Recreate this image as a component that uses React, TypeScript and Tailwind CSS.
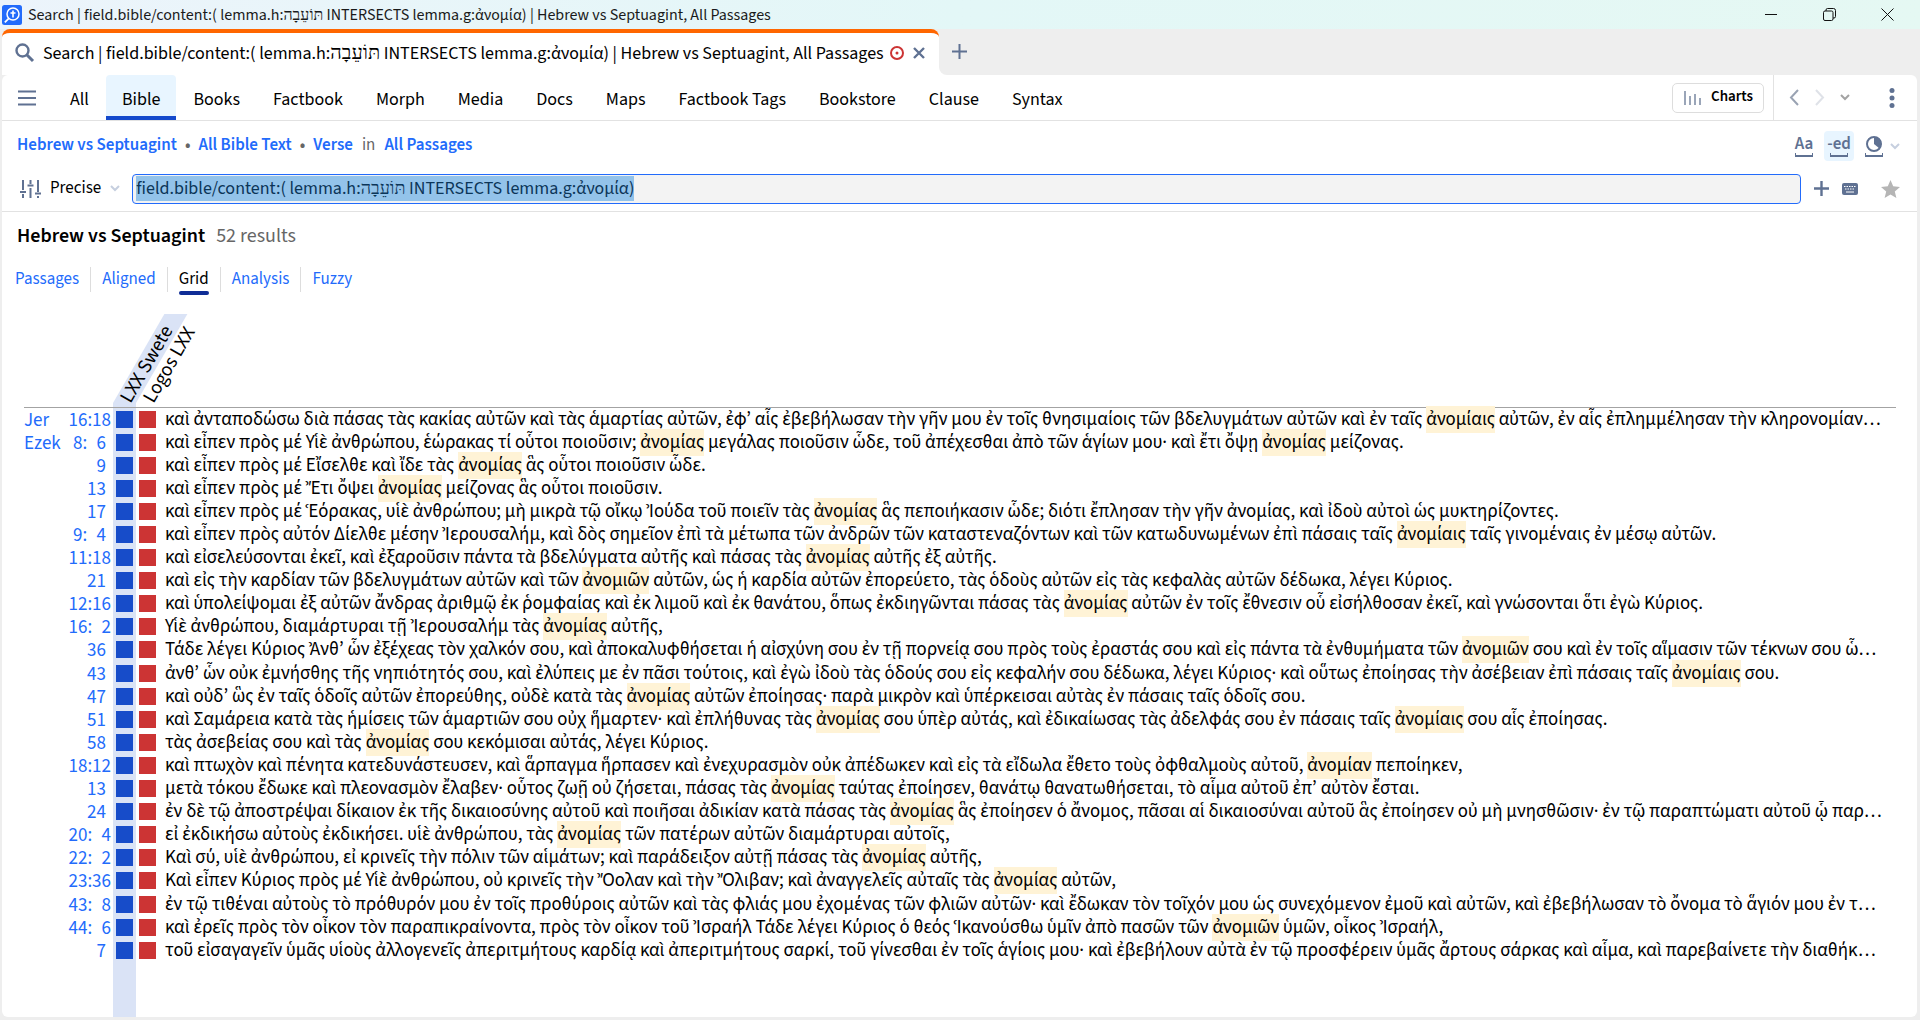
import { useEffect, useRef } from "react";
import type { ReactNode } from "react";

const HEBREW = "תּוֹעֵבָה";
const QUERY = `field.bible/content:( lemma.h:${HEBREW} INTERSECTS lemma.g:ἀνομία)`;

const NAV = ["All", "Bible", "Books", "Factbook", "Morph", "Media", "Docs", "Maps", "Factbook Tags", "Bookstore", "Clause", "Syntax"];
const VIEWS = ["Passages", "Aligned", "Grid", "Analysis", "Fuzzy"];

type Row = { book?: string; verse: string; text: string };

// Search hits are wrapped in square brackets. Single digit verses are padded with a figure space.
const ROWS: Row[] = [
  { book: "Jer", verse: "16:18", text: "καὶ ἀνταποδώσω διὰ πάσας τὰς κακίας αὐτῶν καὶ τὰς ἁμαρτίας αὐτῶν, ἐφ’ αἷς ἐβεβήλωσαν τὴν γῆν μου ἐν τοῖς θνησιμαίοις τῶν βδελυγμάτων αὐτῶν καὶ ἐν ταῖς [ἀνομίαις] αὐτῶν, ἐν αἷς ἐπλημμέλησαν τὴν κληρονομίαν…" },
  { book: "Ezek", verse: "8:\u20076", text: "καὶ εἶπεν πρὸς μέ Υἱὲ ἀνθρώπου, ἑώρακας τί οὗτοι ποιοῦσιν; [ἀνομίας] μεγάλας ποιοῦσιν ὧδε, τοῦ ἀπέχεσθαι ἀπὸ τῶν ἁγίων μου· καὶ ἔτι ὄψῃ [ἀνομίας] μείζονας." },
  { verse: "9", text: "καὶ εἶπεν πρὸς μέ Εἴσελθε καὶ ἴδε τὰς [ἀνομίας] ἃς οὗτοι ποιοῦσιν ὧδε." },
  { verse: "13", text: "καὶ εἶπεν πρὸς μέ Ἔτι ὄψει [ἀνομίας] μείζονας ἃς οὗτοι ποιοῦσιν." },
  { verse: "17", text: "καὶ εἶπεν πρὸς μέ Ἑόρακας, υἱὲ ἀνθρώπου; μὴ μικρὰ τῷ οἴκῳ Ἰούδα τοῦ ποιεῖν τὰς [ἀνομίας] ἃς πεποιήκασιν ὧδε; διότι ἔπλησαν τὴν γῆν ἀνομίας, καὶ ἰδοὺ αὐτοὶ ὡς μυκτηρίζοντες." },
  { verse: "9:\u20074", text: "καὶ εἶπεν πρὸς αὐτόν Δίελθε μέσην Ἰερουσαλήμ, καὶ δὸς σημεῖον ἐπὶ τὰ μέτωπα τῶν ἀνδρῶν τῶν καταστεναζόντων καὶ τῶν κατωδυνωμένων ἐπὶ πάσαις ταῖς [ἀνομίαις] ταῖς γινομέναις ἐν μέσῳ αὐτῶν." },
  { verse: "11:18", text: "καὶ εἰσελεύσονται ἐκεῖ, καὶ ἐξαροῦσιν πάντα τὰ βδελύγματα αὐτῆς καὶ πάσας τὰς [ἀνομίας] αὐτῆς ἐξ αὐτῆς." },
  { verse: "21", text: "καὶ εἰς τὴν καρδίαν τῶν βδελυγμάτων αὐτῶν καὶ τῶν [ἀνομιῶν] αὐτῶν, ὡς ἡ καρδία αὐτῶν ἐπορεύετο, τὰς ὁδοὺς αὐτῶν εἰς τὰς κεφαλὰς αὐτῶν δέδωκα, λέγει Κύριος." },
  { verse: "12:16", text: "καὶ ὑπολείψομαι ἐξ αὐτῶν ἄνδρας ἀριθμῷ ἐκ ῥομφαίας καὶ ἐκ λιμοῦ καὶ ἐκ θανάτου, ὅπως ἐκδιηγῶνται πάσας τὰς [ἀνομίας] αὐτῶν ἐν τοῖς ἔθνεσιν οὗ εἰσήλθοσαν ἐκεῖ, καὶ γνώσονται ὅτι ἐγὼ Κύριος." },
  { verse: "16:\u20072", text: "Υἱὲ ἀνθρώπου, διαμάρτυραι τῇ Ἰερουσαλήμ τὰς [ἀνομίας] αὐτῆς," },
  { verse: "36", text: "Τάδε λέγει Κύριος Ἀνθ’ ὧν ἐξέχεας τὸν χαλκόν σου, καὶ ἀποκαλυφθήσεται ἡ αἰσχύνη σου ἐν τῇ πορνείᾳ σου πρὸς τοὺς ἐραστάς σου καὶ εἰς πάντα τὰ ἐνθυμήματα τῶν [ἀνομιῶν] σου καὶ ἐν τοῖς αἵμασιν τῶν τέκνων σου ὧ…" },
  { verse: "43", text: "ἀνθ’ ὧν οὐκ ἐμνήσθης τῆς νηπιότητός σου, καὶ ἐλύπεις με ἐν πᾶσι τούτοις, καὶ ἐγὼ ἰδοὺ τὰς ὁδούς σου εἰς κεφαλήν σου δέδωκα, λέγει Κύριος· καὶ οὕτως ἐποίησας τὴν ἀσέβειαν ἐπὶ πάσαις ταῖς [ἀνομίαις] σου." },
  { verse: "47", text: "καὶ οὐδ’ ὣς ἐν ταῖς ὁδοῖς αὐτῶν ἐπορεύθης, οὐδὲ κατὰ τὰς [ἀνομίας] αὐτῶν ἐποίησας· παρὰ μικρὸν καὶ ὑπέρκεισαι αὐτὰς ἐν πάσαις ταῖς ὁδοῖς σου." },
  { verse: "51", text: "καὶ Σαμάρεια κατὰ τὰς ἡμίσεις τῶν ἁμαρτιῶν σου οὐχ ἥμαρτεν· καὶ ἐπλήθυνας τὰς [ἀνομίας] σου ὑπὲρ αὐτάς, καὶ ἐδικαίωσας τὰς ἀδελφάς σου ἐν πάσαις ταῖς [ἀνομίαις] σου αἷς ἐποίησας." },
  { verse: "58", text: "τὰς ἀσεβείας σου καὶ τὰς [ἀνομίας] σου κεκόμισαι αὐτάς, λέγει Κύριος." },
  { verse: "18:12", text: "καὶ πτωχὸν καὶ πένητα κατεδυνάστευσεν, καὶ ἅρπαγμα ἥρπασεν καὶ ἐνεχυρασμὸν οὐκ ἀπέδωκεν καὶ εἰς τὰ εἴδωλα ἔθετο τοὺς ὀφθαλμοὺς αὐτοῦ, [ἀνομίαν] πεποίηκεν," },
  { verse: "13", text: "μετὰ τόκου ἔδωκε καὶ πλεονασμὸν ἔλαβεν· οὗτος ζωῇ οὐ ζήσεται, πάσας τὰς [ἀνομίας] ταύτας ἐποίησεν, θανάτῳ θανατωθήσεται, τὸ αἷμα αὐτοῦ ἐπ’ αὐτὸν ἔσται." },
  { verse: "24", text: "ἐν δὲ τῷ ἀποστρέψαι δίκαιον ἐκ τῆς δικαιοσύνης αὐτοῦ καὶ ποιῆσαι ἀδικίαν κατὰ πάσας τὰς [ἀνομίας] ἃς ἐποίησεν ὁ ἄνομος, πᾶσαι αἱ δικαιοσύναι αὐτοῦ ἃς ἐποίησεν οὐ μὴ μνησθῶσιν· ἐν τῷ παραπτώματι αὐτοῦ ᾧ παρ…" },
  { verse: "20:\u20074", text: "εἰ ἐκδικήσω αὐτοὺς ἐκδικήσει. υἱὲ ἀνθρώπου, τὰς [ἀνομίας] τῶν πατέρων αὐτῶν διαμάρτυραι αὐτοῖς," },
  { verse: "22:\u20072", text: "Καὶ σύ, υἱὲ ἀνθρώπου, εἰ κρινεῖς τὴν πόλιν τῶν αἱμάτων; καὶ παράδειξον αὐτῇ πάσας τὰς [ἀνομίας] αὐτῆς," },
  { verse: "23:36", text: "Καὶ εἶπεν Κύριος πρὸς μέ Υἱὲ ἀνθρώπου, οὐ κρινεῖς τὴν Ὄολαν καὶ τὴν Ὄλιβαν; καὶ ἀναγγελεῖς αὐταῖς τὰς [ἀνομίας] αὐτῶν," },
  { verse: "43:\u20078", text: "ἐν τῷ τιθέναι αὐτοὺς τὸ πρόθυρόν μου ἐν τοῖς προθύροις αὐτῶν καὶ τὰς φλιάς μου ἐχομένας τῶν φλιῶν αὐτῶν· καὶ ἔδωκαν τὸν τοῖχόν μου ὡς συνεχόμενον ἐμοῦ καὶ αὐτῶν, καὶ ἐβεβήλωσαν τὸ ὄνομα τὸ ἅγιόν μου ἐν τ…" },
  { verse: "44:\u20076", text: "καὶ ἐρεῖς πρὸς τὸν οἶκον τὸν παραπικραίνοντα, πρὸς τὸν οἶκον τοῦ Ἰσραήλ Τάδε λέγει Κύριος ὁ θεός Ἱκανούσθω ὑμῖν ἀπὸ πασῶν τῶν [ἀνομιῶν] ὑμῶν, οἶκος Ἰσραήλ," },
  { verse: "7", text: "τοῦ εἰσαγαγεῖν ὑμᾶς υἱοὺς ἀλλογενεῖς ἀπεριτμήτους καρδίᾳ καὶ ἀπεριτμήτους σαρκί, τοῦ γίνεσθαι ἐν τοῖς ἁγίοις μου· καὶ ἐβεβήλουν αὐτὰ ἐν τῷ προσφέρειν ὑμᾶς ἄρτους σάρκας καὶ αἷμα, καὶ παρεβαίνετε τὴν διαθήκ…" },
];

export default function App() {
  return (
    <div className="flex h-screen min-h-[600px] flex-col overflow-hidden bg-[#eeeeee] font-['Source_Sans_3','Noto_Sans','Liberation_Serif',sans-serif] text-[18px] text-black">
      <TitleBar />
      <TabStrip />
      <main className="mr-[3px] mb-[3px] ml-[2px] flex min-h-0 flex-1 flex-col overflow-hidden rounded-md bg-white">
        <Toolbar />
        <Scope />
        <SearchBar />
        <div className="flex items-baseline gap-[11px] pt-[10px] pl-[15px] text-[20px] leading-[28px]">
          <h1 className="font-semibold">Hebrew vs Septuagint</h1>
          <span className="text-[#666666]">52 results</span>
        </div>
        <ViewTabs />
        <ResultGrid />
      </main>
    </div>
  );
}

function TitleBar() {
  return (
    <header className="flex h-[29px] shrink-0 items-center bg-linear-to-r from-[#ecf4fb] via-[#e3f7f7] to-[#e5f8f3] pl-[2px]">
      <AppIcon />
      <span className="ml-[6px] text-[16px] text-[#1a1a1a]">
        Search | field.bible/content:( lemma.h:{HEBREW} INTERSECTS lemma.g:ἀνομία) | Hebrew vs Septuagint, All Passages
      </span>
      <div className="ml-auto flex h-full items-center">
        <button aria-label="Minimize" className="flex w-[58px] justify-center">
          <svg width="12" height="12" viewBox="0 0 12 12" stroke="#111" fill="none"><path d="M0 5.500h12" /></svg>
        </button>
        <button aria-label="Restore" className="flex w-[58px] justify-center">
          <svg width="13" height="13" viewBox="0 0 13 13" stroke="#111" fill="none">
            <rect x=".5" y="3" width="9.500" height="9.500" rx="1.500" />
            <path d="M3 3V2A1.500 1.500 0 0 1 4.500 .5h6A2 2 0 0 1 12.500 2.500v6a1.500 1.500 0 0 1-1.500 1.500h-1" />
          </svg>
        </button>
        <button aria-label="Close" className="mr-[4px] flex w-[58px] justify-center">
          <svg width="13" height="13" viewBox="0 0 13 13" stroke="#111" fill="none"><path d="M.5 .5l12 12M12.500 .5l-12 12" /></svg>
        </button>
      </div>
    </header>
  );
}

function TabStrip() {
  return (
    <div className="flex h-[46px] shrink-0 bg-linear-to-r from-white from-50% to-[#eeeeee] to-50%">
      <div className="flex bg-[#eeeeee] pl-[2px]">
        <div className="flex items-center rounded-t-lg border-t-4 border-[#ff6600] bg-white pr-[14px] pb-[2px] pl-[13px]">
          <svg width="20" height="20" viewBox="0 0 20 20" fill="none" stroke="#5f7192">
            <circle cx="7.500" cy="7.500" r="6" strokeWidth="2.400" />
            <path d="M12 12l6 6" strokeWidth="3" />
          </svg>
          <span className="ml-[8px] whitespace-nowrap">
            Search | field.bible/content:( lemma.h:<span className="font-['Liberation_Serif'] text-[20px] leading-none">{HEBREW}</span> INTERSECTS lemma.g:ἀνομία) | Hebrew vs Septuagint, All Passages
          </span>
          <svg className="ml-[6px]" width="14" height="14" viewBox="0 0 14 14" fill="none" stroke="#cc3434">
            <circle cx="7" cy="7" r="6" strokeWidth="2" />
            <circle cx="7" cy="7" r="1.500" fill="#cc3434" stroke="none" />
          </svg>
          <button aria-label="Close tab" className="ml-[9px]">
            <svg width="12" height="12" viewBox="0 0 12 12" stroke="#5f7192" strokeWidth="2.400"><path d="M1 1l10 10M11 1L1 11" /></svg>
          </button>
        </div>
      </div>
      <div className="flex flex-1 bg-white">
        <div className="flex flex-1 items-center rounded-bl-lg bg-[#eeeeee] pb-[2px] pl-[13px]">
          <button aria-label="New tab">
            <svg width="15" height="15" viewBox="0 0 15 15" stroke="#5f7192" strokeWidth="2"><path d="M7.500 0v15M0 7.500h15" /></svg>
          </button>
        </div>
      </div>
    </div>
  );
}

function Toolbar() {
  return (
    <div className="flex h-[46px] shrink-0 border-b border-[#e2e2e2]">
      <button aria-label="Menu" className="flex w-[52px] items-center pl-[16px]">
        <svg width="18" height="16" viewBox="0 0 18 16" stroke="#5f7192" strokeWidth="2"><path d="M0 1.500h18M0 8h18M0 14.500h18" /></svg>
      </button>
      <nav className="flex gap-px">
        {NAV.map((item) => (
          <button
            key={item}
            className={`px-4 pt-[7px] ${
              item === "Bible"
                ? "rounded-t border-b-4 border-[#1449cc] bg-[#e8f5ff]"
                : "border-b-4 border-transparent"
            }`}
          >
            {item}
          </button>
        ))}
      </nav>
      <button className="my-auto mr-[9px] ml-auto flex h-[30px] w-[92px] items-center gap-[10px] rounded-[5px] border border-[#dddddd] pl-[11px] text-[15px] font-semibold">
        <svg width="17" height="14" viewBox="0 0 17 14" stroke="#9aa5b8" strokeWidth="2"><path d="M1 0v14M6 5v9M11 3v11M16 7v7" /></svg>
        Charts
      </button>
      <div className="flex items-center border-l border-[#e2e2e2] pr-[22px] pl-[15px]">
        <button aria-label="Back">
          <svg width="10" height="17" viewBox="0 0 10 17" fill="none" stroke="#9aa3b3" strokeWidth="2"><path d="M9 1L2 8.500 9 16" /></svg>
        </button>
        <button aria-label="Forward" className="ml-[16px]">
          <svg width="10" height="17" viewBox="0 0 10 17" fill="none" stroke="#dfe2e8" strokeWidth="2"><path d="M1 1l7 7.500L1 16" /></svg>
        </button>
        <button aria-label="History" className="ml-[15px]">
          <Chevron color="#a3a3a3" />
        </button>
        <button aria-label="More" className="ml-[39px]">
          <svg width="6" height="20" viewBox="0 0 6 20" fill="#5f7192"><circle cx="3" cy="2.500" r="2.500" /><circle cx="3" cy="10" r="2.500" /><circle cx="3" cy="17.500" r="2.500" /></svg>
        </button>
      </div>
    </div>
  );
}

function Scope() {
  return (
    <div className="flex h-[48px] shrink-0 items-center pt-[2px] pr-[17px] pl-[15px] text-[17px] font-semibold text-[#226bfb]">
      <a href="#resource">Hebrew vs Septuagint</a>
      <Dot />
      <a href="#text">All Bible Text</a>
      <Dot />
      <a href="#verse">Verse</a>
      <span className="mx-[9px] font-normal text-[#666666]">in</span>
      <a href="#passages">All Passages</a>
      <div className="ml-auto flex items-center gap-[5px]">
        <FormatButton label="Match case"><span className="leading-[16px]">Aa</span></FormatButton>
        <FormatButton label="Match all word forms" active><span className="leading-[16px]">-ed</span></FormatButton>
        <FormatButton label="Match equivalent references">
          <svg width="16" height="16" viewBox="0 0 16 16" fill="none" stroke="#5f7192" strokeWidth="2">
            <circle cx="8" cy="8" r="7" />
            <path d="M8 1a7 7 0 0 1 5.500 11.500L8 8z" fill="#5f7192" stroke="none" />
          </svg>
        </FormatButton>
      </div>
      <span className="ml-px"><Chevron color="#c6cfdf" /></span>
    </div>
  );
}

function FormatButton({ label, active, children }: { label: string; active?: boolean; children: ReactNode }) {
  return (
    <button
      aria-label={label}
      className={`flex h-[30px] w-[30px] flex-col items-center justify-center rounded text-[17px] font-semibold text-[#5f7192] ${
        active ? "bg-[#e8f5ff]" : ""
      }`}
    >
      {children}
      <span className="mt-px h-[4px] w-[18px] border-x border-b-2 border-[#5f7192]" />
    </button>
  );
}

function SearchBar() {
  const input = useRef<HTMLInputElement>(null);

  useEffect(() => {
    input.current?.focus();
    input.current?.select();
  }, []);

  return (
    <div className="flex h-[43px] shrink-0 items-center border-b border-[#e2e2e2] pr-[17px] pb-[3px] pl-[18px]">
      <button className="flex items-center text-[17px]">
        <svg width="21" height="18" viewBox="0 0 21 18" stroke="#5f7192" strokeWidth="2">
          <path d="M3 0v10M3 14v4M10.500 0v4M10.500 8v10M18 0v12M18 16v2M0 12h6M7.500 5.500h6M15 13.500h6" />
        </svg>
        <span className="ml-[9px]">Precise</span>
        <span className="ml-[9px]"><Chevron color="#c6cfdf" /></span>
      </button>
      <input
        ref={input}
        aria-label="Search query"
        defaultValue={QUERY}
        className="ml-[12px] h-[30px] min-w-0 flex-1 rounded border border-[#226bfb] bg-[#f3f3f3] px-[3px] outline-none selection:bg-[#93c3ea] selection:text-[#0b3558]"
      />
      <button aria-label="Add" className="ml-[13px]">
        <svg width="15" height="15" viewBox="0 0 15 15" stroke="#5f7192" strokeWidth="2.400"><path d="M7.500 0v15M0 7.500h15" /></svg>
      </button>
      <button aria-label="Keyboard" className="ml-[13px]">
        <svg width="16" height="12" viewBox="0 0 16 12">
          <rect width="16" height="12" rx="2" fill="#5f7192" />
          <path d="M2 3.500h12M3 6h10" stroke="#fff" strokeDasharray="1.500 1" />
          <path d="M4 9h8" stroke="#fff" />
        </svg>
      </button>
      <button aria-label="Favorite" className="ml-[23px]">
        <svg width="19" height="18" viewBox="0 0 19 18" fill="#b5b5b5"><path d="M9.500 0l2.700 6.300 6.800.6-5.200 4.500 1.600 6.600-5.900-3.500L3.600 18l1.600-6.600L0 6.900l6.800-.6z" /></svg>
      </button>
    </div>
  );
}

function ViewTabs() {
  return (
    <nav className="mt-[17px] ml-[2px] flex h-[30px] shrink-0 items-start divide-x divide-[#dddddd] text-[17px] leading-[25px]">
      {VIEWS.map((view) => (
        <button key={view} className="relative px-[11px] text-[#226bfb]">
          {view === "Grid" ? (
            <>
              <span className="text-black">Grid</span>
              <span className="absolute inset-x-[11px] top-[24px] h-[4px] rounded bg-[#0f2d96]" />
            </>
          ) : (
            view
          )}
        </button>
      ))}
    </nav>
  );
}

function ResultGrid() {
  return (
    <div className="min-h-0 flex-1 pr-[21px] pl-[22px]">
      <table className="h-full w-full table-fixed border-collapse text-[19px]">
        <thead>
          <tr className="h-[110px] border-b border-[#a3a3a3] align-bottom font-normal">
            <th className="w-[89px]" colSpan={2} aria-label="Reference" />
            <th className="relative w-[23px] p-0 font-normal">
              <span className="absolute inset-x-0 bottom-0 h-[4px] bg-[#dae3f6]" />
              <span className="absolute inset-x-0 bottom-[4px] h-[89px] origin-bottom -skew-x-30 bg-[#dae3f6]" />
              <SlantedLabel>LXX Swete</SlantedLabel>
            </th>
            <th className="relative w-[23px] p-0 font-normal">
              <SlantedLabel>Logos LXX</SlantedLabel>
            </th>
            <th aria-label="Text" />
          </tr>
        </thead>
        <tbody>
          {ROWS.map((row, i) => (
            // every tenth row takes up the rounding of the row pitch
            <tr key={i} className={`align-top ${i % 10 === 0 ? "h-[24px]" : "h-[23px]"}`}>
              <td className="p-0 pt-[2px] leading-[21px] whitespace-nowrap text-[#226bfb]">{row.book}</td>
              <td className="p-0 pt-[2px] pr-[7px] text-right leading-[21px] whitespace-nowrap text-[#226bfb]">{row.verse}</td>
              <td className="bg-[#dae3f6] p-0 px-[3px] pt-[3px]"><div className="h-[17px] bg-[#174cc9]" /></td>
              <td className="p-0 px-[3px] pt-[3px]"><div className="h-[17px] bg-[#cc3434]" /></td>
              <td className="p-0 pl-[6px] leading-[23px] whitespace-nowrap"><Verse text={row.text} /></td>
            </tr>
          ))}
          <tr>
            <td colSpan={2} />
            <td className="bg-[#dae3f6]" />
            <td colSpan={2} />
          </tr>
        </tbody>
      </table>
    </div>
  );
}

function SlantedLabel({ children }: { children: ReactNode }) {
  return (
    <span className="absolute bottom-[1px] left-[21px] origin-bottom-left -rotate-60 text-[20px] leading-[20px] whitespace-nowrap">
      {children}
    </span>
  );
}

function Verse({ text }: { text: string }) {
  return text.split(/[[\]]/).map((part, i) =>
    i % 2 === 1 ? <mark key={i} className="bg-[#fff3d6] text-black">{part}</mark> : part
  );
}

function Dot() {
  return <span className="mx-[8px] text-[#666666]">•</span>;
}

function Chevron({ color }: { color: string }) {
  return (
    <svg width="10" height="7" viewBox="0 0 10 7" fill="none" stroke={color} strokeWidth="2"><path d="M1 1l4 4 4-4" /></svg>
  );
}

function AppIcon() {
  return (
    <svg width="20" height="20" viewBox="0 0 20 20" fill="none" stroke="#fff">
      <rect width="20" height="20" rx="2.500" fill="#226bfb" stroke="none" />
      <circle cx="11" cy="9" r="6" strokeWidth="1.500" />
      <path d="M6.800 13.300L2.800 17.300" strokeWidth="1.800" />
      <path d="M11 5.500v7M8.500 8h5" strokeWidth="1.600" />
    </svg>
  );
}
